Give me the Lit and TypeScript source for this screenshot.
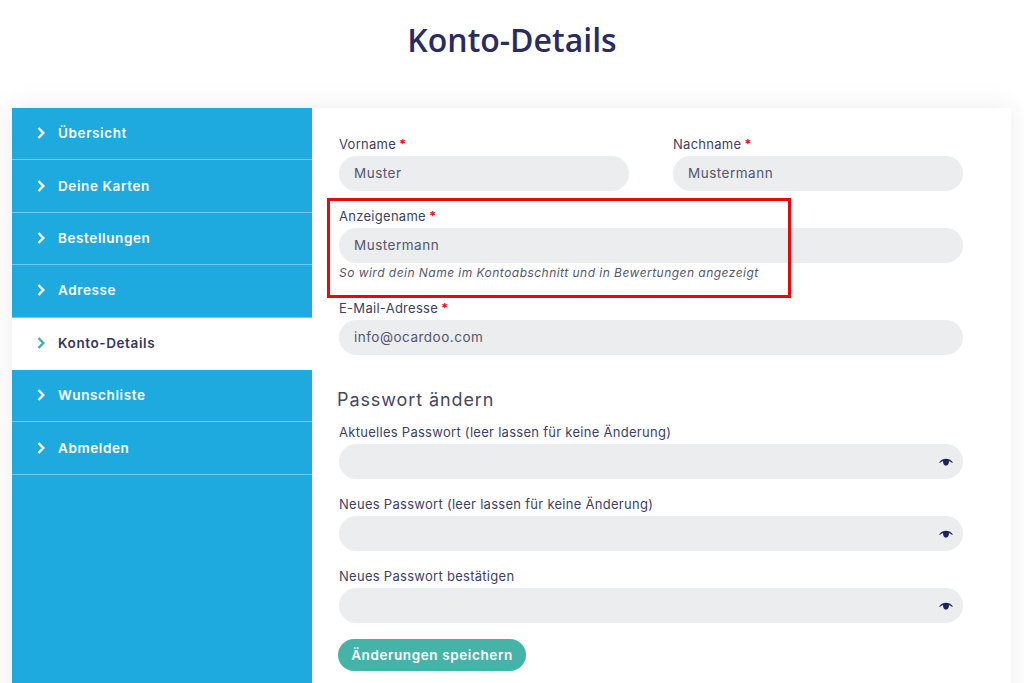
import { LitElement, html, css } from "lit";
import { customElement } from "lit/decorators.js";

const NAV = ["Übersicht", "Deine Karten", "Bestellungen", "Adresse", "Konto-Details", "Wunschliste", "Abmelden"];

const eye = html`<svg class="eye" viewBox="0 0 16 10" aria-hidden="true"><path d="M0 5C2.400 1.700 5.200.6 8 .6s5.600 1.100 8 4.400l-1.300.2C13 4 12.100 3.600 11.300 3.400c.4 2.400-1.200 5.400-3.300 5.400S4.300 5.800 4.700 3.400C3.900 3.600 3 4 1.300 5.200z"/></svg>`;
const chevron = html`<svg class="chev" viewBox="0 0 10 14" aria-hidden="true"><path d="M2.500 2l4.800 5-4.800 5" fill="none" stroke="currentColor" stroke-width="2.400"/></svg>`;

@customElement("app-root")
export class AppRoot extends LitElement {
  static styles = css`
    :host {
      display: block;
      height: 683px;
      overflow: hidden;
      background: #fff;
      font-family: "Inter", "Liberation Sans", sans-serif;
      color: #3e3f5e;
    }
    h1 {
      margin: 0;
      height: 108px;
      box-sizing: border-box;
      padding-top: 17px;
      text-align: center;
      font: 600 32px/46px "Open Sans", sans-serif;
      color: #2a2c5e;
    }
    .card {
      display: flex;
      margin: 0 13px 0 12px;
      background: #fff;
      box-shadow: 0 0 26px rgba(40, 40, 60, 0.09);
    }
    nav {
      flex: 0 0 300px;
      background: #1eaade;
      min-height: 620px;
    }
    .item {
      display: flex;
      align-items: center;
      height: 52.400px;
      box-sizing: border-box;
      padding: 0 0 1px 24px;
      gap: 12px;
      border-bottom: 1px solid #6fcbed;
      color: #fff;
      font-size: 13.500px;
      font-weight: 600;
    }
    .item span { letter-spacing: 0.6px; }
    .item.active {
      background: #fff;
      color: #35365c;
      border-bottom: none;
    }
    .item.active .chev { color: #3fb0a6; }
    .chev { width: 10px; height: 14px; flex: none; }
    .form {
      flex: 1;
      padding: 24px 48px 40px 27px;
      position: relative;
    }
    .row { display: flex; gap: 44px; }
    .row .field { flex: 1; }
    .field { margin-bottom: 13px; }
    .field.flush { margin-bottom: 0; }
    label {
      display: block;
      height: 24px;
      line-height: 25px;
      font-size: 13px;
      font-weight: 400;
      letter-spacing: 0.28px;
      color: #3e3f5e;
      white-space: nowrap;
    }
    .req { color: #e0141c; font-weight: 700; margin-left: -1px; }
    .input {
      display: flex;
      align-items: center;
      justify-content: space-between;
      height: 35px;
      box-sizing: border-box;
      padding: 0 10px 1px 15px;
      border-radius: 18px;
      background: #ebedee;
      font-size: 13.500px;
      color: #55566e;
      letter-spacing: 0.5px;
    }
    .eye { width: 14px; height: 9px; fill: #20235c; margin: 2px 0 0 auto; }
    .hint {
      height: 20px;
      line-height: 20px;
      font-size: 12px;
      font-style: italic;
      color: #55566e;
      letter-spacing: 0.47px;
      white-space: nowrap;
    }
    .field.last { margin-bottom: 16px; }
    h2 {
      margin: 0 0 0 -2px;
      height: 65px;
      box-sizing: border-box;
      padding-top: 33px;
      font-size: 18px;
      line-height: 24px;
      font-weight: 400;
      color: #45465f;
      letter-spacing: 0.9px;
    }
    button {
      display: block;
      width: 188px;
      height: 32px;
      margin-left: -1px;
      padding: 0;
      border: none;
      border-radius: 16px;
      background: #44b3a8;
      color: #fff;
      font: 600 13.500px "Inter", sans-serif;
      letter-spacing: 0.6px;
    }
    .mark {
      position: absolute;
      left: 15px;
      top: 90px;
      width: 464px;
      height: 100px;
      box-sizing: border-box;
      border: 3px solid #e8090f;
      pointer-events: none;
    }
  `;

  private field(label: string, value = "", required = false, extra = "") {
    return html`<div class="field ${extra}">
      <label>${label}${required ? html` <span class="req">*</span>` : ""}</label>
      <div class="input">${value}${value ? "" : eye}</div>
    </div>`;
  }

  render() {
    return html`
      <h1>Konto-Details</h1>
      <div class="card">
        <nav>
          ${NAV.map(
            (n) => html`<div class="item ${n === "Konto-Details" ? "active" : ""}">${chevron}<span>${n}</span></div>`
          )}
        </nav>
        <div class="form">
          <div class="row">
            ${this.field("Vorname", "Muster", true)}
            ${this.field("Nachname", "Mustermann", true)}
          </div>
          <div class="field">
            <label>Anzeigename <span class="req">*</span></label>
            <div class="input">Mustermann</div>
            <div class="hint">So wird dein Name im Kontoabschnitt und in Bewertungen angezeigt</div>
          </div>
          ${this.field("E-Mail-Adresse", "info@ocardoo.com", true, "flush")}
          <h2>Passwort ändern</h2>
          ${this.field("Aktuelles Passwort (leer lassen für keine Änderung)")}
          ${this.field("Neues Passwort (leer lassen für keine Änderung)")}
          ${this.field("Neues Passwort bestätigen", "", false, "last")}
          <button>Änderungen speichern</button>
          <div class="mark"></div>
        </div>
      </div>
    `;
  }
}
